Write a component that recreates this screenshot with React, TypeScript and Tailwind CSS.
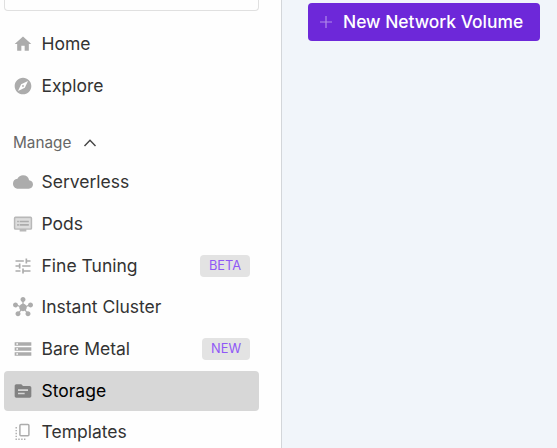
import type { ReactNode } from 'react';
import { MdHome, MdExplore, MdCloud, MdTune, MdHub, MdStorage, MdSource } from 'react-icons/md';

function PodsIcon() {
  return (
    <svg viewBox="0 0 24 24" className="size-5" fill="currentColor">
      <path opacity=".4" d="M3 5h18v12H3z" />
      <path opacity=".85" d="M21 3H3a2 2 0 0 0-2 2v12a2 2 0 0 0 2 2h5v2h8v-2h5a2 2 0 0 0 2-2V5a2 2 0 0 0-2-2Zm0 14H3V5h18v12Z" />
      <path d="M8 8h11v2H8zM8 12h11v2H8zM5 8h2v2H5zM5 12h2v2H5z" />
    </svg>
  );
}

function TemplatesIcon() {
  return (
    <svg viewBox="0 0 20 20" className="size-5" fill="currentColor">
      <rect x="6.9" y="2.4" width="9" height="11.4" rx="1" fill="none" stroke="currentColor" strokeWidth="1.500" />
      <path d="M2.500 5h1.400v1.400H2.500zM2.500 7.900h1.400v1.400H2.500zM2.500 10.800h1.400v1.400H2.500zM2.500 13.700h1.400v1.400H2.500zM2.500 16.500h1.400v1.400H2.500zM5.300 16.500h1.400v1.400H5.300zM8.200 16.500h1.400v1.400H8.200zM11 16.500h1.400v1.400H11z" />
    </svg>
  );
}

function Row({ icon, label, badge, active = false }: { icon: ReactNode; label: string; badge?: string; active?: boolean }) {
  return (
    <a className={`flex h-10 items-center rounded-[4px] px-[9px] ${active ? 'bg-[#d7d7d7] text-black' : 'text-[#333333]'}`}>
      <span className={`mr-[8.5px] flex size-5 shrink-0 items-center justify-center ${active ? 'text-[#828282]' : 'text-[#acacac]'}`}>{icon}</span>
      <span className="grow text-[17.5px] leading-6">{label}</span>
      {badge && <span className="rounded-[4px] bg-[#e3e3e3] px-[9px] text-[12.8px] leading-[22px] text-[#8f58f6]">{badge}</span>}
    </a>
  );
}

export default function App() {
  return (
    <div className="flex h-[448px] w-[557px] overflow-hidden bg-[#f1f5fa] font-['Inter',sans-serif]">
      <aside className="flex w-[282px] shrink-0 flex-col border-r border-[#d3d6da] bg-[#fefefe] pr-[22px] pl-1">
        <div className="h-[11px] shrink-0 rounded-b-[4px] border border-t-0 border-[#e0e0e0]" />
        <nav className="mt-[13px] flex shrink-0 flex-col gap-[1.7px]">
          <Row icon={<MdHome className="size-5" />} label="Home" />
          <Row icon={<MdExplore className="size-5" />} label="Explore" />
        </nav>
        <div className="mt-[27.6px] flex h-5 shrink-0 items-center gap-3 pl-[9px] text-[15.3px] text-[#666666]">
          <span>Manage</span>
          <svg viewBox="0 0 14 14" className="size-3.5" fill="none" stroke="#444" strokeWidth="1.4"><path d="m1.500 10 5.500-5.800 5.500 5.800" /></svg>
        </div>
        <nav className="mt-[9px] flex shrink-0 flex-col gap-[1.7px]">
          <Row icon={<MdCloud className="size-5" />} label="Serverless" />
          <Row icon={<PodsIcon />} label="Pods" />
          <Row icon={<MdTune className="size-5" />} label="Fine Tuning" badge="BETA" />
          <Row icon={<MdHub className="size-5" />} label="Instant Cluster" />
          <Row icon={<MdStorage className="size-5" />} label="Bare Metal" badge="NEW" />
          <Row icon={<MdSource className="size-5" />} label="Storage" active />
          <Row icon={<TemplatesIcon />} label="Templates" />
        </nav>
      </aside>
      <main className="grow pt-[3px] pl-[26px]">
        <button className="flex h-[38px] w-[232px] items-center rounded-[4px] bg-[#6d28d9] pl-3 text-[17.4px] font-medium text-white">
          <svg viewBox="0 0 12 12" className="mr-[11px] size-3" fill="none" stroke="#b18be9" strokeWidth="1.2"><path d="M6 0v12M0 6h12" /></svg>
          <span className="whitespace-nowrap">New Network Volume</span>
        </button>
      </main>
    </div>
  );
}
